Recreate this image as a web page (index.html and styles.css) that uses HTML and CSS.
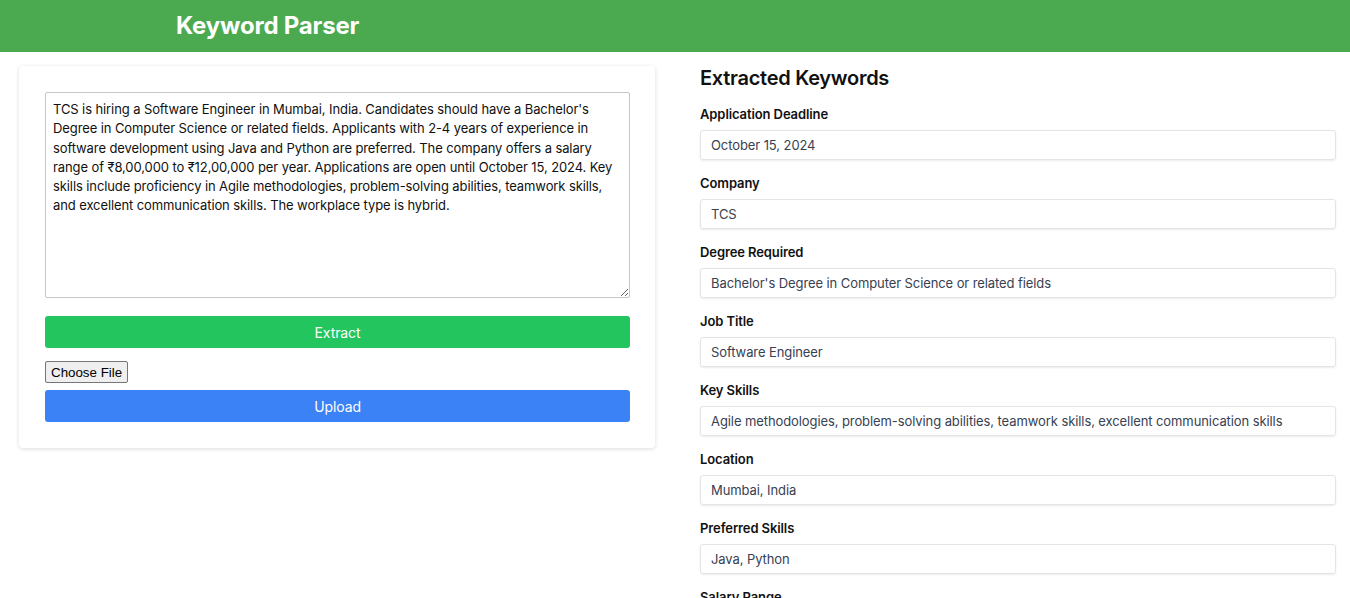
FILE: index.html
```html
<!DOCTYPE html>
<html lang="en">
<head>
<meta charset="utf-8">
<title>Keyword Parser</title>
<link rel="stylesheet" href="styles.css">
</head>
<body>
<header class="topbar">
  <h1 class="brand">Keyword Parser</h1>
</header>
<main class="layout">
  <section class="card">
    <textarea class="jd-input">TCS is hiring a Software Engineer in Mumbai, India. Candidates should have a Bachelor's Degree in Computer Science or related fields. Applicants with 2-4 years of experience in software development using Java and Python are preferred. The company offers a salary range of ₹8,00,000 to ₹12,00,000 per year. Applications are open until October 15, 2024. Key skills include proficiency in Agile methodologies, problem-solving abilities, teamwork skills, and excellent communication skills. The workplace type is hybrid.</textarea>
    <button class="btn btn-green">Extract</button>
    <div class="file-row"><button class="file-btn">Choose File</button></div>
    <button class="btn btn-blue">Upload</button>
  </section>
  <section class="results">
    <h2 class="results-title">Extracted Keywords</h2>
    <div class="field"><div class="field-label">Application Deadline</div><div class="field-value">October 15, 2024</div></div>
    <div class="field"><div class="field-label">Company</div><div class="field-value">TCS</div></div>
    <div class="field"><div class="field-label">Degree Required</div><div class="field-value">Bachelor's Degree in Computer Science or related fields</div></div>
    <div class="field"><div class="field-label">Job Title</div><div class="field-value">Software Engineer</div></div>
    <div class="field"><div class="field-label">Key Skills</div><div class="field-value">Agile methodologies, problem-solving abilities, teamwork skills, excellent communication skills</div></div>
    <div class="field"><div class="field-label">Location</div><div class="field-value">Mumbai, India</div></div>
    <div class="field"><div class="field-label">Preferred Skills</div><div class="field-value">Java, Python</div></div>
    <div class="field"><div class="field-label">Salary Range</div><div class="field-value">₹8,00,000 to ₹12,00,000 per year</div></div>
    <div class="field"><div class="field-label">Workplace Type</div><div class="field-value">Hybrid</div></div>
  </section>
</main>
</body>
</html>
```
FILE: styles.css
```css
html, body {
  margin: 0;
  padding: 0;
}
body {
  font-family: Inter, "Noto Sans", sans-serif;
  color: #111;
  background: #fff;
}
.topbar {
  background: #4baa4f;
  height: 52px;
  display: flex;
  align-items: center;
  padding-left: 176px;
}
.brand {
  margin: 0;
  color: #fff;
  font-size: 24px;
  font-weight: 700;
  line-height: 32px;
  letter-spacing: -0.2px;
}
.layout {
  display: grid;
  grid-template-columns: 636px 636px;
  column-gap: 45px;
  padding: 12px 14px 0 19px;
  align-items: start;
}
.card {
  margin-top: 2px;
  background: #fff;
  border-radius: 4px;
  box-shadow: 0 1px 4px rgba(0,0,0,0.14);
  padding: 26px 25px 26px 26px;
  display: flex;
  flex-direction: column;
}
.jd-input {
  display: block;
  box-sizing: border-box;
  width: 100%;
  height: 206px;
  padding: 7px 7px;
  border: 1px solid #c6c6c9;
  border-radius: 2px;
  font-family: Inter, "Noto Sans", sans-serif;
  font-size: 13px;
  line-height: 19.3px;
  letter-spacing: -0.1px;
  color: #111;
  resize: vertical;
}
.btn {
  display: block;
  width: 100%;
  height: 32px;
  border: 0;
  border-radius: 3px;
  color: #fff;
  font-family: Inter, "Noto Sans", sans-serif;
  font-size: 14px;
  letter-spacing: -0.1px;
  padding: 0;
}
.btn-green {
  background: #22c55e;
  margin-top: 18px;
}
.btn-blue {
  background: #3b82f6;
  margin-top: 7px;
}
.file-row {
  margin-top: 13px;
  display: flex;
}
.file-btn {
  font-family: "Liberation Sans", Arial, sans-serif;
  font-size: 13.333px;
  height: 22px;
  padding: 1px 5px;
  background: #efefef;
  color: #000;
  border: 1px solid #767676;
  border-radius: 2px;
}
.results-title {
  margin: 0 0 12px;
  font-size: 20px;
  line-height: 28px;
  font-weight: 600;
  letter-spacing: -0.28px;
}
.field {
  margin-bottom: 13px;
}
.field-label {
  font-size: 13px;
  line-height: 20px;
  font-weight: 600;
  letter-spacing: -0.1px;
  margin-bottom: 6px;
}
.field-value {
  box-sizing: border-box;
  height: 30px;
  padding: 0 10px;
  display: flex;
  align-items: center;
  border: 1px solid #e3e4e8;
  border-radius: 3px;
  box-shadow: 0 1px 2px rgba(0,0,0,0.08);
  font-size: 13px;
  letter-spacing: -0.09px;
  color: #374151;
}
```
